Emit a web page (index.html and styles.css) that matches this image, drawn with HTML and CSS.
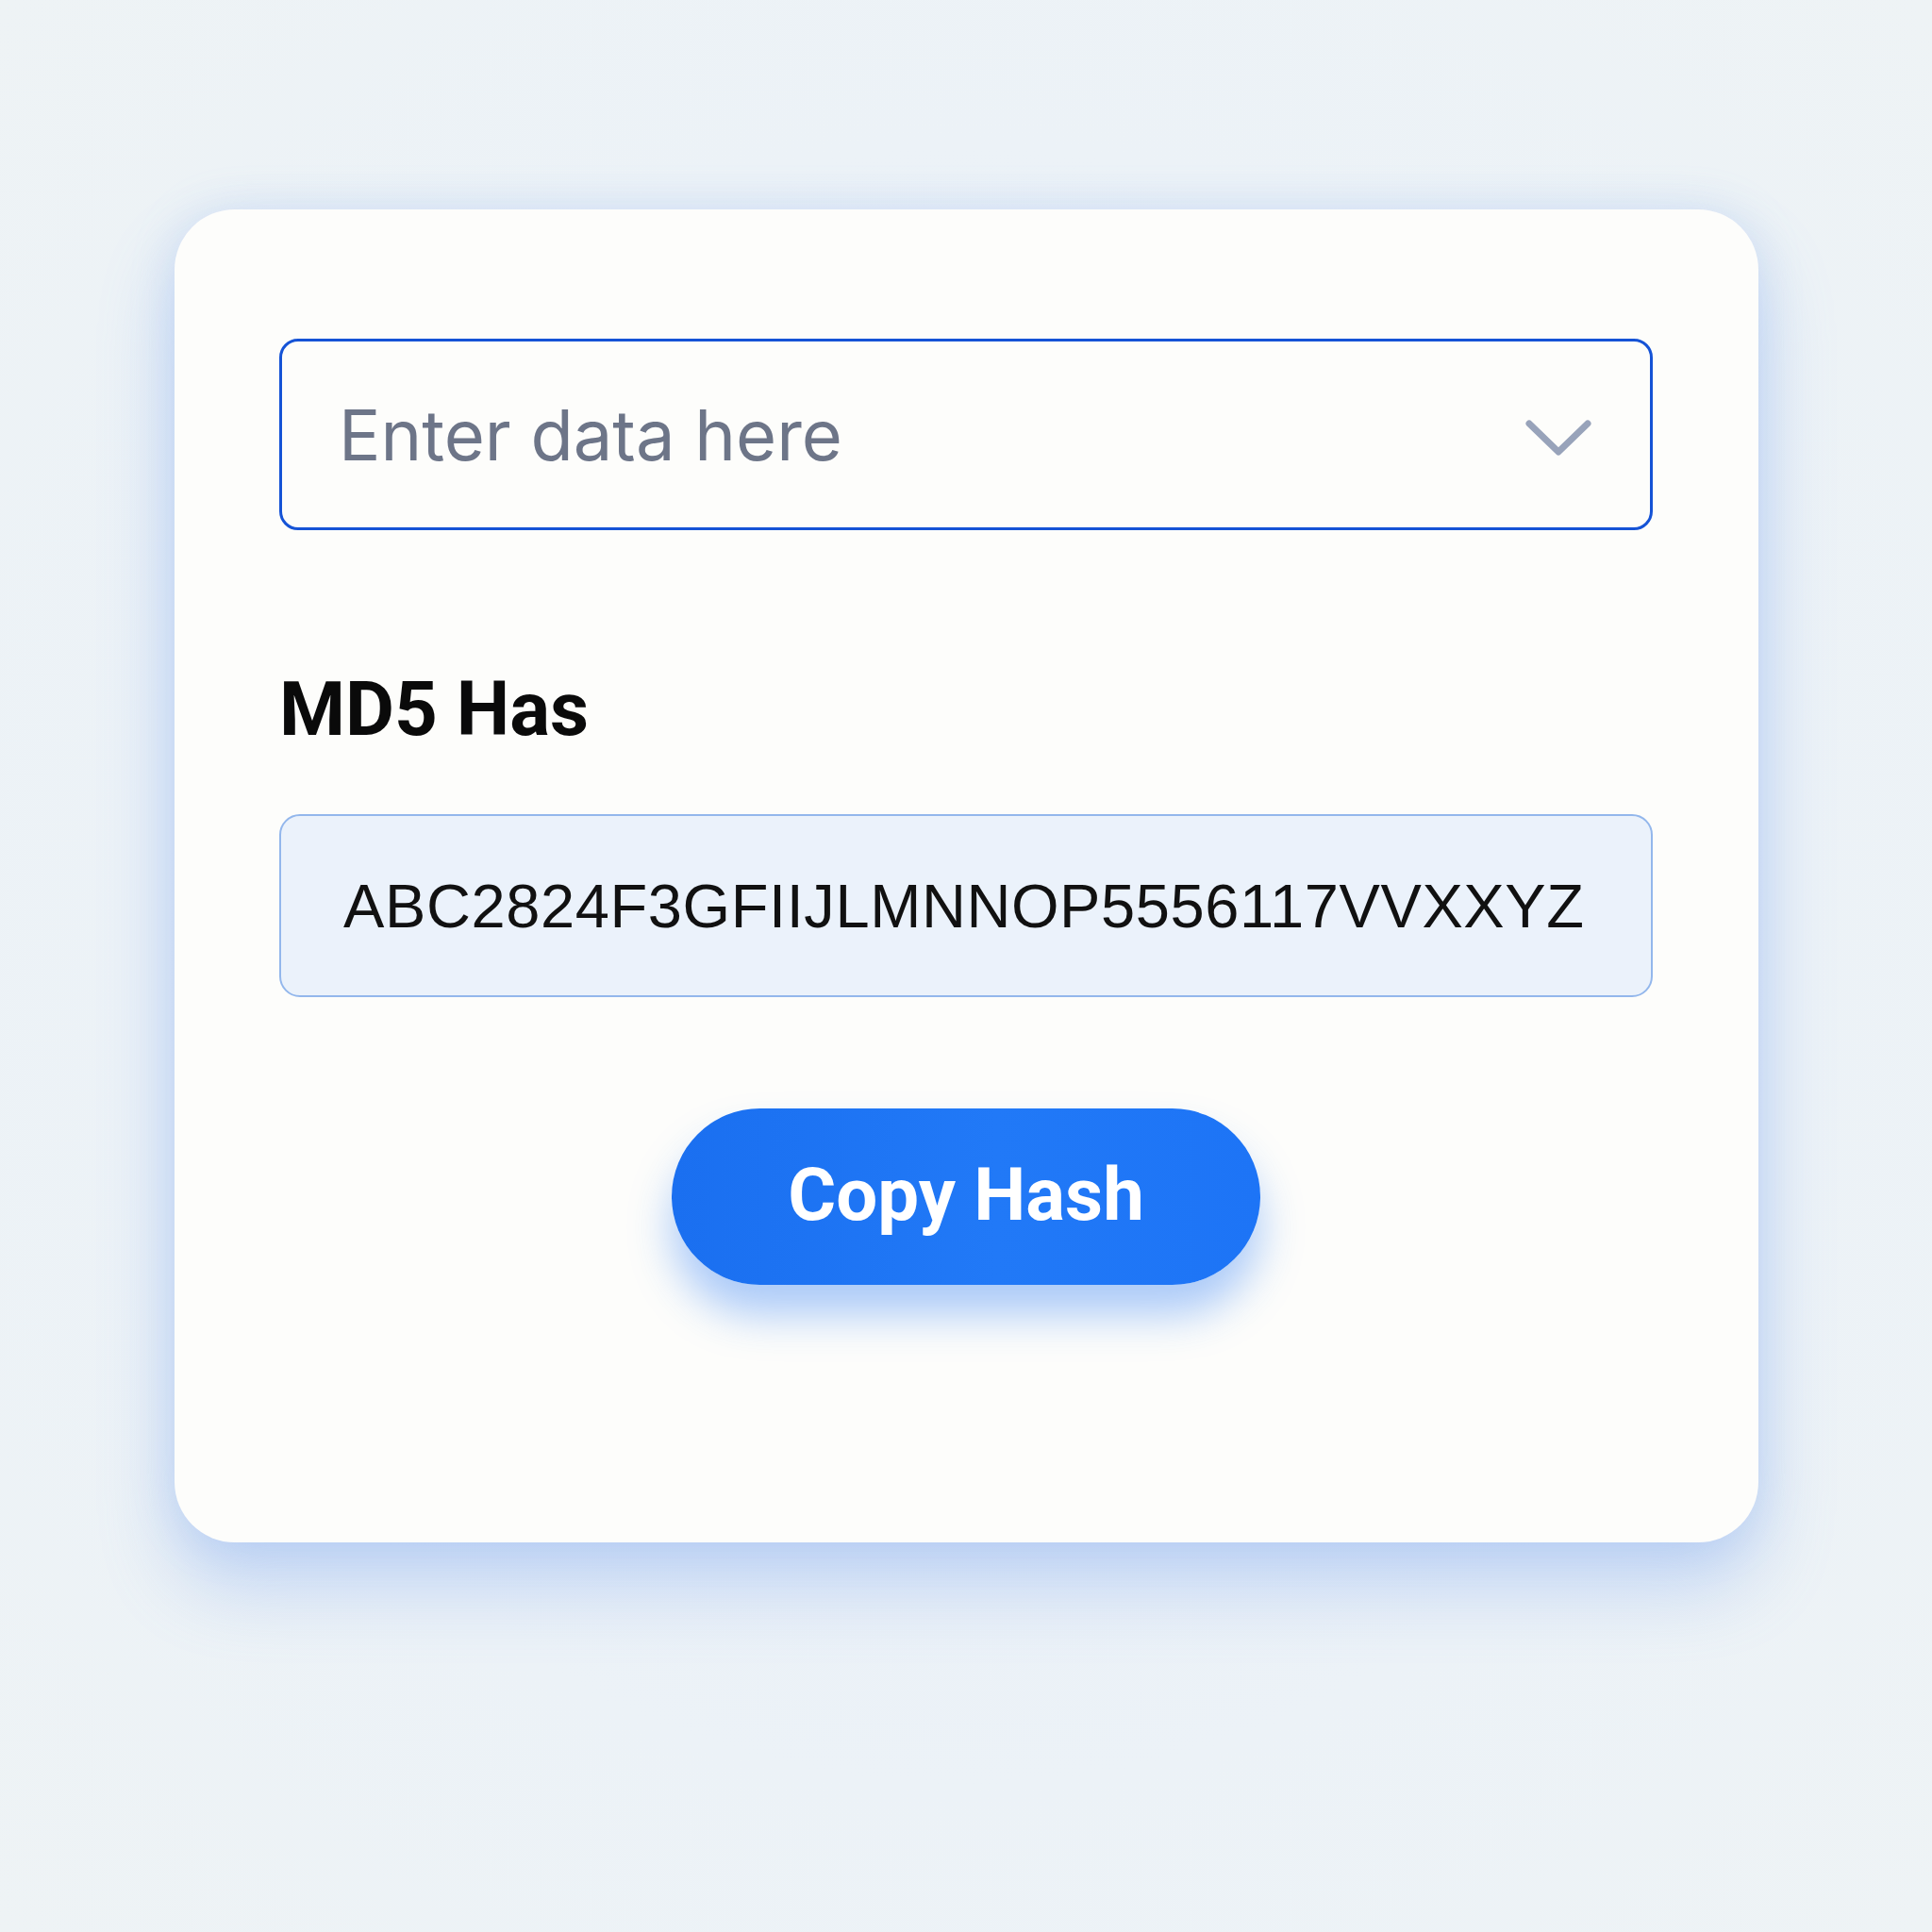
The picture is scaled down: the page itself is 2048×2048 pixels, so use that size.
FILE: index.html
```html
<!DOCTYPE html>
<html lang="en">
<head>
<meta charset="utf-8">
<title>MD5 Hash</title>
<link rel="stylesheet" href="styles.css">
</head>
<body>
<main class="stage">
  <section class="card">
    <div class="select">
      <span class="placeholder">Enter data here</span>
      <svg class="chevron" width="72" height="42" viewBox="0 0 72 42" aria-hidden="true">
        <polyline points="5,6 36,36 67,6" fill="none" stroke="#98a3ba" stroke-width="7" stroke-linecap="round" stroke-linejoin="round"/>
      </svg>
    </div>
    <h2 class="label">MD5 Has</h2>
    <div class="hash">ABC2824F3GFIIJLMNNOP5556117VVXXYZ</div>
    <div class="actions">
      <button class="copy">Copy Hash</button>
    </div>
  </section>
</main>
</body>
</html>
```
FILE: styles.css
```css
html, body {
  margin: 0;
  padding: 0;
}
body {
  width: 2048px;
  height: 2048px;
  background: radial-gradient(ellipse at 50% 50%, #e7eef8 0%, #ecf2f7 60%, #eef3f5 100%);
  font-family: Inter, "Noto Sans", sans-serif;
  overflow: hidden;
}
.stage {
  padding: 222px 184px 0 185px;
}
.card {
  width: 1679px;
  height: 1413px;
  box-sizing: border-box;
  background: #fdfdfb;
  border-radius: 64px;
  padding: 137px 112px 0 111px;
  box-shadow: 0 45px 80px rgba(100, 150, 240, 0.32), 0 0 45px rgba(150, 185, 240, 0.28);
  display: flex;
  flex-direction: column;
}
.select {
  height: 203px;
  box-sizing: border-box;
  border: 3px solid #1553d6;
  border-radius: 20px;
  display: flex;
  align-items: center;
  justify-content: space-between;
  padding: 0 61px 0 60px;
}
.placeholder {
  font-family: Inter, "Noto Sans", sans-serif;
  font-size: 74px;
  color: #6d7588;
  line-height: 1;
  letter-spacing: 0;
}
.chevron {
  display: block;
  margin-top: 6px;
}
.label {
  margin: 149px 0 0 0;
  font-family: Roboto, "Liberation Sans", sans-serif;
  font-weight: 700;
  font-size: 80px;
  line-height: 82px;
  color: #0a0a0a;
}
.hash {
  margin-top: 70px;
  height: 194px;
  box-sizing: border-box;
  border: 2px solid #93b7ec;
  border-radius: 22px;
  background: #ebf2fb;
  display: flex;
  align-items: center;
  padding: 0 60px 0 66px;
  font-family: "Liberation Sans", Arial, sans-serif;
  font-size: 65px;
  letter-spacing: 0.6px;
  color: #111111;
  white-space: nowrap;
}
.actions {
  margin-top: 118px;
  display: flex;
  justify-content: center;
}
.copy {
  width: 624px;
  height: 187px;
  border: none;
  border-radius: 94px;
  background: linear-gradient(90deg, #1a6ff0 0%, #2179f7 55%, #1d74f6 100%);
  color: #ffffff;
  font-family: Roboto, "Liberation Sans", sans-serif;
  font-weight: 700;
  font-size: 78px;
  line-height: 1;
  padding: 0 0 4px 0;
  box-shadow: 0 32px 45px rgba(40, 120, 245, 0.38);
  cursor: pointer;
}
```
